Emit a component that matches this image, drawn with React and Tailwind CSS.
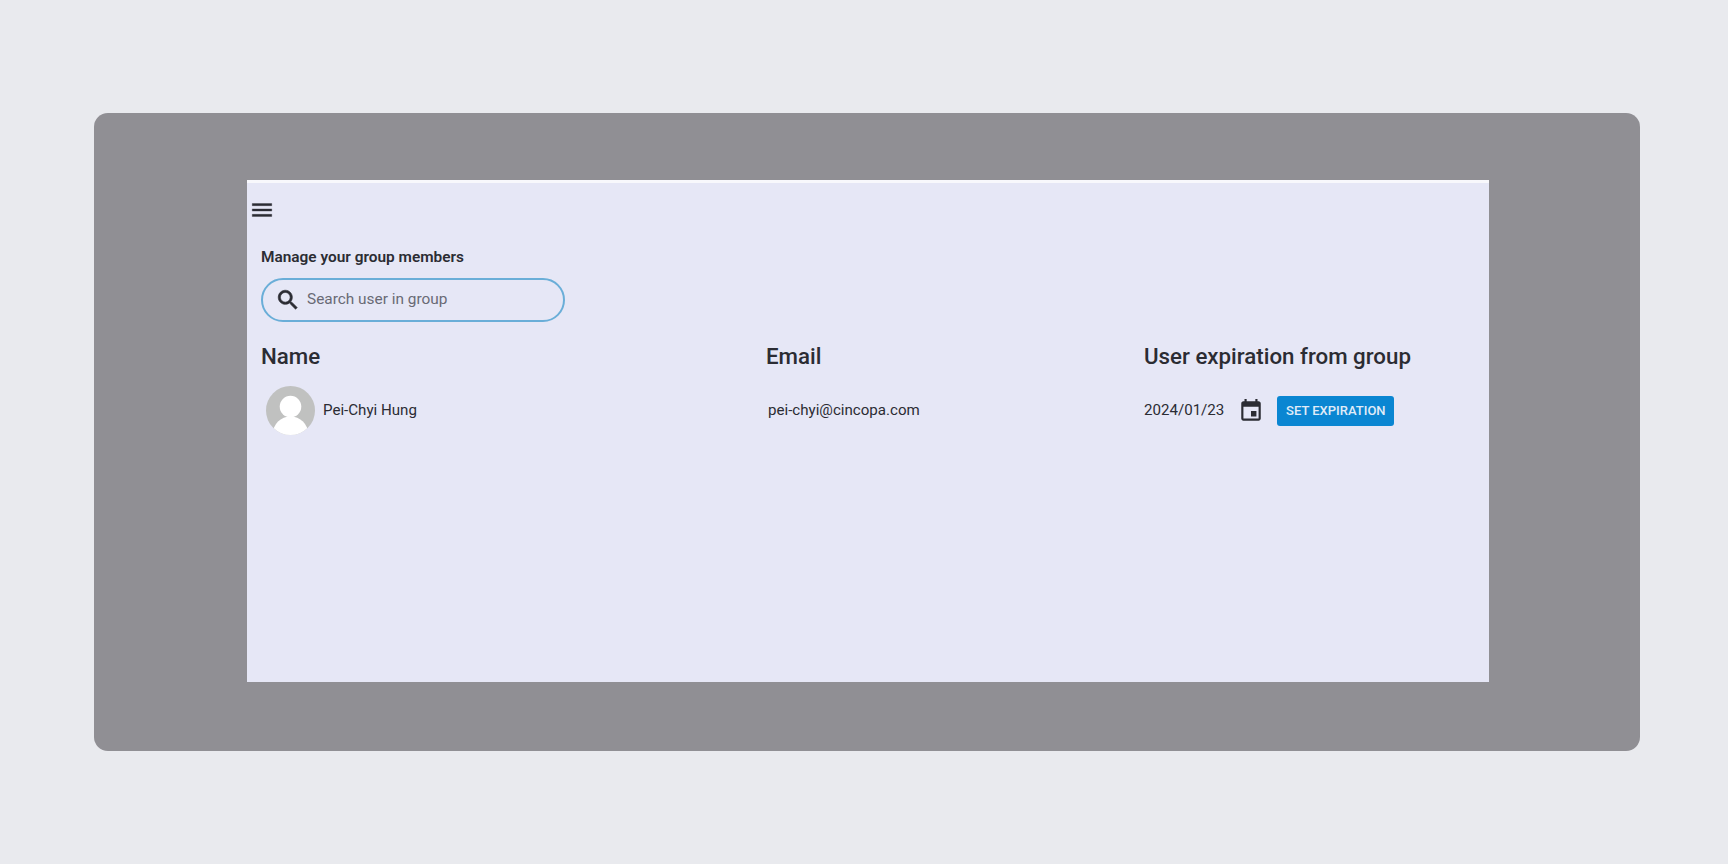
const user = { name: 'Pei-Chyi Hung', email: 'pei-chyi@cincopa.com', expires: '2024/01/23' };

const App = () => {
    return (
        <div className="w-full h-[864px] overflow-hidden bg-[#e9eaee] pt-[113px] pl-[94px] font-['Roboto',sans-serif]">
            {/* Grey frame */}
            <div className="w-[1546px] h-[638px] rounded-[14px] bg-[#908f94] pt-[67px] pl-[153px]">
                <div className="w-[1242px] h-[502px] bg-[#e6e7f6] border-t-[3px] border-[#f8f8fc] text-[#2b2c33]">
                    {/* Toolbar */}
                    <div className="h-[63px] pl-[2px] pt-[14px]">
                        <svg viewBox="0 0 24 24" fill="currentColor" stroke="currentColor" strokeWidth="0.3" className="w-[26px] h-[26px]">
                            <path d="M3 18h18v-2H3v2zm0-5h18v-2H3v2zm0-7v2h18V6H3z" />
                        </svg>
                    </div>

                    <div className="pl-[14px]">
                        <h2 className="text-[15.4px] leading-[22px] font-semibold">Manage your group members</h2>

                        {/* Search */}
                        <div className="mt-[10px] flex items-center w-[304px] h-[44px] pl-[12px] rounded-full border-2 border-[#6aaed8]">
                            <svg viewBox="0 0 24 24" fill="currentColor" stroke="currentColor" strokeWidth="0.6" className="w-[26px] h-[26px]">
                                <path d="M15.5 14h-.79l-.28-.27C15.41 12.59 16 11.11 16 9.5 16 5.91 13.09 3 9.5 3S3 5.91 3 9.5 5.91 16 9.5 16c1.61 0 3.09-.59 4.23-1.57l.27.28v.79l5 4.99L20.49 19l-4.99-5zm-6 0C7.01 14 5 11.99 5 9.5S7.01 5 9.5 5 14 7.01 14 9.5 11.99 14 9.5 14z" />
                            </svg>
                            <span className="ml-[6px] text-[15.4px] text-[#696a75]">Search user in group</span>
                        </div>

                        {/* Table */}
                        <div className="mt-[20px] flex text-[22.3px] leading-[28px] font-medium">
                            <div className="w-[505px]">Name</div>
                            <div className="w-[378px]">Email</div>
                            <div>User expiration from group</div>
                        </div>

                        <div className="mt-[16px] flex items-center text-[15.1px]">
                            <div className="w-[505px] flex items-center pl-[5px]">
                                <svg viewBox="0 0 50 50" className="w-[49px] h-[49px]">
                                    <defs>
                                        <clipPath id="avatarClip">
                                            <circle cx="25" cy="25" r="25" />
                                        </clipPath>
                                    </defs>
                                    <circle cx="25" cy="25" r="25" fill="#c0c1c0" />
                                    <g clipPath="url(#avatarClip)" fill="#ffffff">
                                        <circle cx="25" cy="21" r="11" />
                                        <ellipse cx="25" cy="49" rx="18" ry="18" />
                                    </g>
                                </svg>
                                <span className="ml-[8px]">{user.name}</span>
                            </div>
                            <div className="w-[378px] pl-[2px]">{user.email}</div>
                            <div className="flex items-center">
                                <span>{user.expires}</span>
                                <svg viewBox="0 0 24 24" fill="currentColor" className="ml-[14px] w-[26px] h-[26px]">
                                    <path d="M17 12h-5v5h5v-5zM16 1v2H8V1H6v2H5c-1.11 0-1.99.9-1.99 2L3 19c0 1.1.89 2 2 2h14c1.1 0 2-.9 2-2V5c0-1.1-.9-2-2-2h-1V1h-2zm3 18H5V8h14v11z" />
                                </svg>
                                <button className="ml-[13px] h-[30px] w-[117px] rounded-[3px] bg-[#0a86d2] text-[#e0ecf8] text-[13px] font-medium">
                                    SET EXPIRATION
                                </button>
                            </div>
                        </div>
                    </div>
                </div>
            </div>
        </div>
    );
};

export default App;
